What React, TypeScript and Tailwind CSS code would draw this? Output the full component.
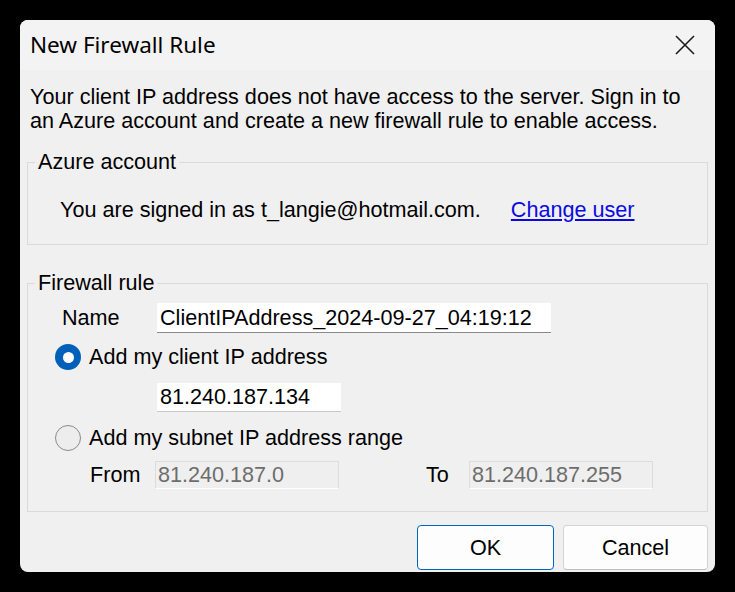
import { useState } from 'react';

const sans = { fontFamily: '"Liberation Sans", Arial, sans-serif' };

function Radio({ checked, label, onClick }: { checked: boolean; label: string; onClick: () => void }) {
  return (
    <button type="button" onClick={onClick} className="flex items-center gap-[8px] h-[26px] text-left">
      {checked ? (
        <span className="w-[26px] h-[26px] rounded-full bg-[#005fb8] flex items-center justify-center">
          <span className="w-[11px] h-[11px] rounded-full bg-white" />
        </span>
      ) : (
        <span className="w-[26px] h-[26px] rounded-full border border-[#8a8a8a] bg-[#ededed]" />
      )}
      <span>{label}</span>
    </button>
  );
}

export default function App() {
  const [mode, setMode] = useState<'client' | 'range'>('client');

  return (
    <div className="w-[735px] h-[592px] bg-black p-[20px]" style={sans}>
      <div className="w-[695px] h-[552px] rounded-[8px] bg-[#f0f0f0] flex flex-col overflow-hidden text-[21.6px] text-black leading-[24px]">
        {/* title bar */}
        <div className="h-[50px] shrink-0 flex items-center justify-between pl-[10px] pr-[20px] bg-[#f3f3f3]">
          <span className="text-[22.5px]" style={{ fontFamily: '"Segoe UI", "Noto Sans", sans-serif' }}>
            New Firewall Rule
          </span>
          <svg width="20" height="20" viewBox="0 0 20 20" className="text-[#1b1b1b]">
            <path d="M1 1 L19 19 M19 1 L1 19" stroke="currentColor" strokeWidth="1.6" />
          </svg>
        </div>

        <p className="mt-[15px] pl-[10px] pr-[25px]">
          Your client IP address does not have access to the server. Sign in to an Azure account and create a new
          firewall rule to enable access.
        </p>

        <fieldset className="mx-[7px] mt-[17px] border border-[#dadada]">
          <legend className="ml-[7px] px-[3px]">Azure account</legend>
          <div className="flex pt-[24px] pb-[22px] pl-[32px]">
            <span>You are signed in as t_langie@hotmail.com.</span>
            <a href="#" className="ml-[30px] text-[#0a0ae0] underline">
              Change user
            </a>
          </div>
        </fieldset>

        <fieldset className="mx-[7px] mt-[26px] border border-[#dadada]">
          <legend className="ml-[7px] px-[3px]">Firewall rule</legend>
          <div className="flex flex-col pt-[8px] pb-[22px] pl-[27px]">
            <div className="flex items-center h-[30px]">
              <span className="ml-[7px] w-[95px]">Name</span>
              <div className="w-[394px] h-[30px] bg-white border-b border-[#8a8a8a] pl-[3px] flex items-center">
                ClientIPAddress_2024-09-27_04:19:12
              </div>
            </div>
            <div className="mt-[11px]">
              <Radio checked={mode === 'client'} label="Add my client IP address" onClick={() => setMode('client')} />
            </div>
            <div className="mt-[13px] ml-[102px] w-[184px] h-[29px] bg-white border-b border-[#c8c8c8] pl-[3px] flex items-center">
              81.240.187.134
            </div>
            <div className="mt-[13px]">
              <Radio checked={mode === 'range'} label="Add my subnet IP address range" onClick={() => setMode('range')} />
            </div>
            <div className="mt-[10px] flex items-center h-[28px]">
              <span className="ml-[35px] w-[65px]">From</span>
              <div className="w-[184px] h-[28px] border border-[#dcdcdc] border-b-white bg-[#efefef] pl-[2px] flex items-center text-[#6d6d6d]">
                81.240.187.0
              </div>
              <span className="ml-[87px] w-[43px]">To</span>
              <div className="w-[184px] h-[28px] border border-[#dcdcdc] border-b-white bg-[#efefef] pl-[2px] flex items-center text-[#6d6d6d]">
                81.240.187.255
              </div>
            </div>
          </div>
        </fieldset>

        <div className="mt-[13px] flex justify-end gap-[9px] pr-[7px]">
          <button className="w-[137px] h-[45px] rounded-[4px] border border-[#0067c0] bg-[#fdfdfd]">OK</button>
          <button className="w-[145px] h-[45px] rounded-[4px] border border-[#d4d4d4] border-b-[#bdbdbd] bg-[#fdfdfd]">
            Cancel
          </button>
        </div>
      </div>
    </div>
  );
}
